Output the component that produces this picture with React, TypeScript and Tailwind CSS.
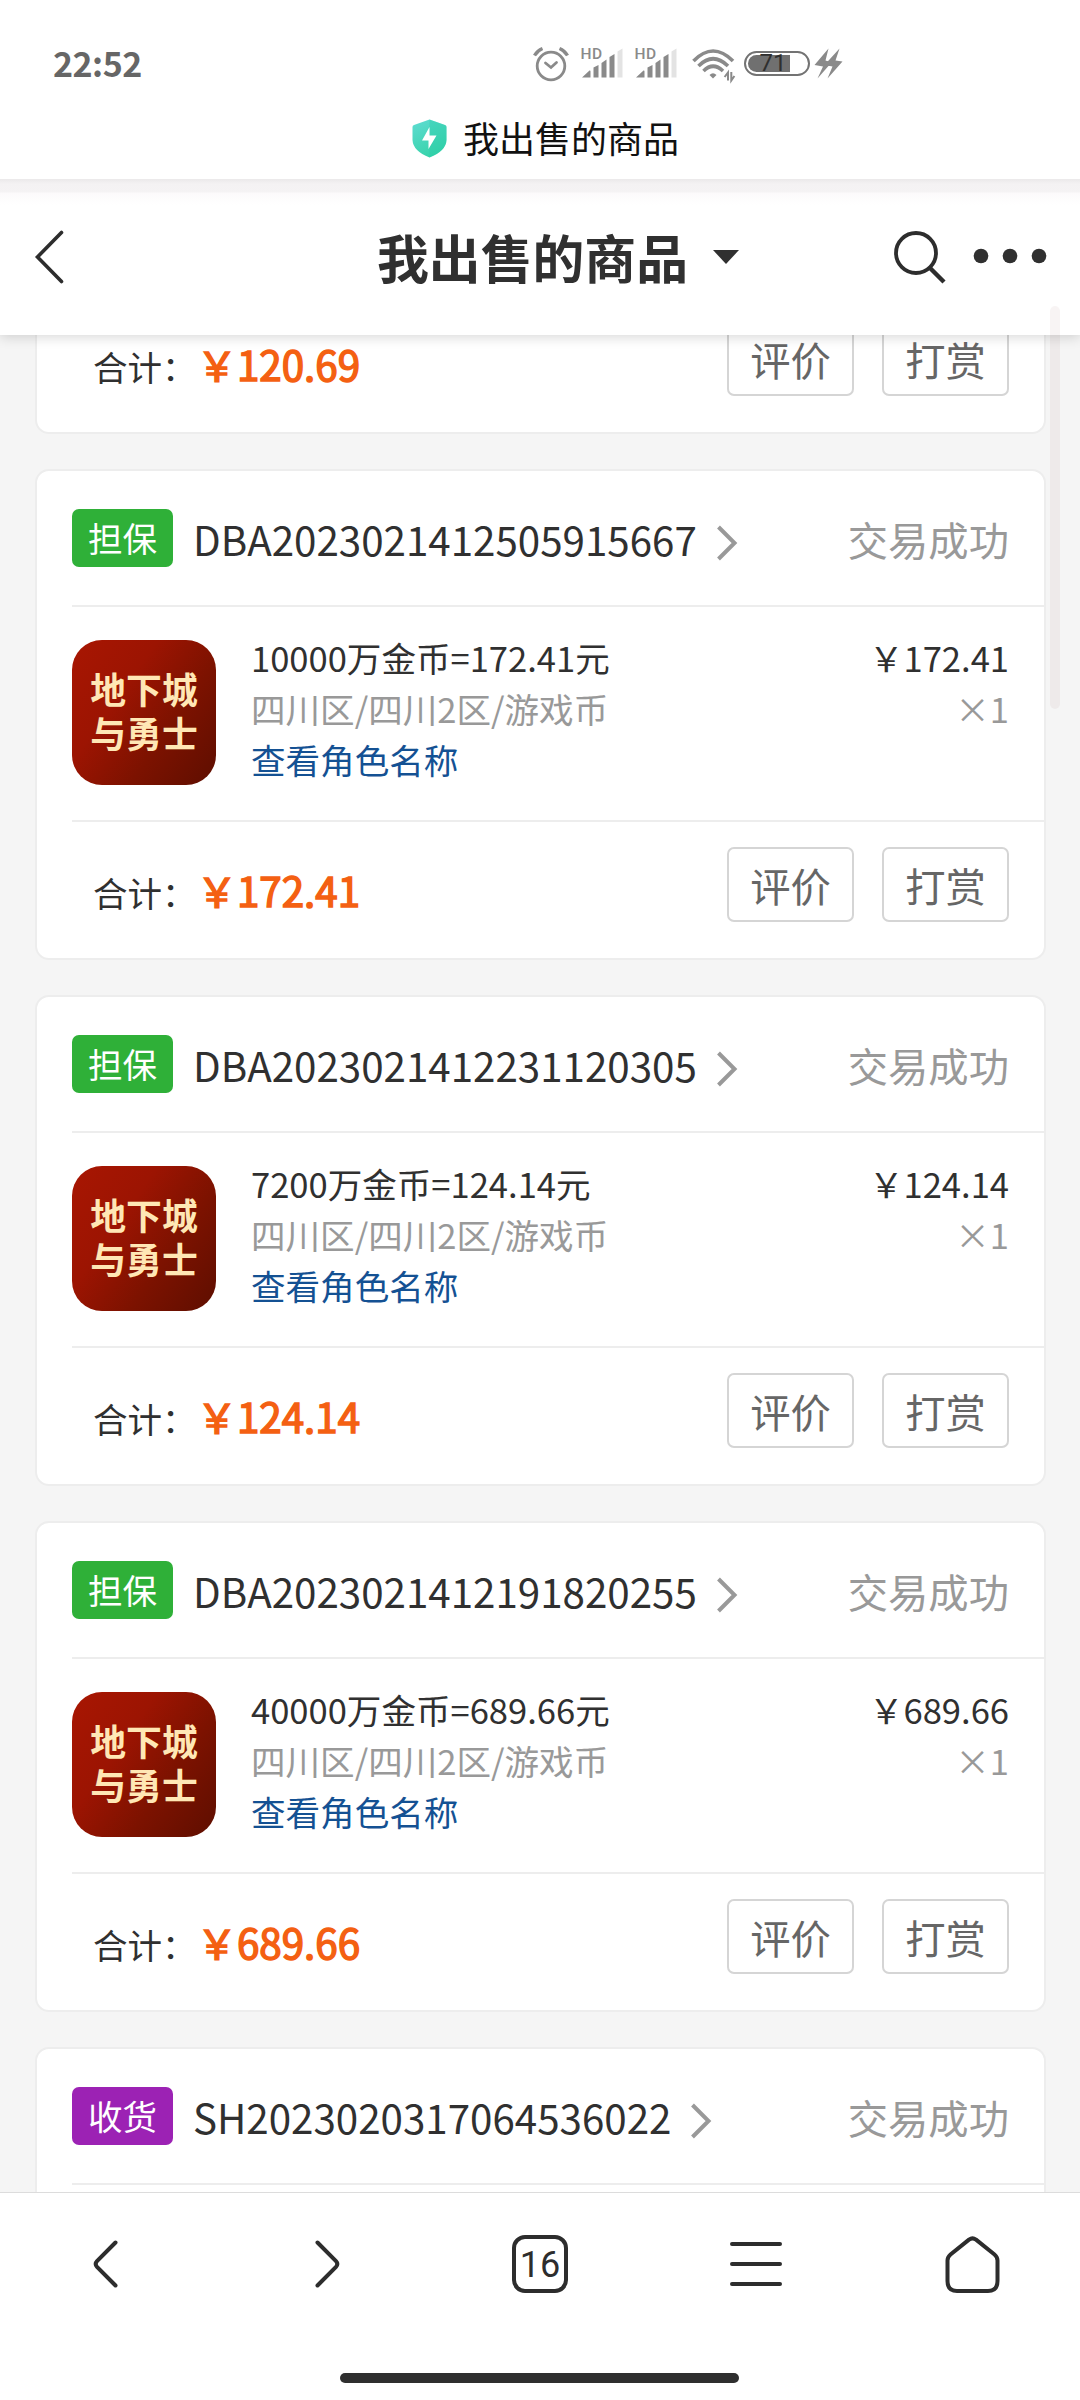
import React from 'react';

interface Order {
  id: string;
  tag: '担保' | '收货';
  title?: string;
  amount?: string;
}

const orders: Order[] = [
  { id: 'DBA2023021412505915667', tag: '担保', title: '10000万金币=172.41元', amount: '172.41' },
  { id: 'DBA2023021412231120305', tag: '担保', title: '7200万金币=124.14元', amount: '124.14' },
  { id: 'DBA2023021412191820255', tag: '担保', title: '40000万金币=689.66元', amount: '689.66' },
  { id: 'SH2023020317064536022', tag: '收货' },
];

const Signal: React.FC = () => (
  <svg className="w-[42px] h-[32px]" viewBox="0 0 42 32" fill="#8a8a8a">
    <text x="-0.5" y="12.5" fontFamily="Roboto" fontSize="15.5" fontWeight="500" letterSpacing="0.6">HD</text>
    <path d="M1 31.5 L8.5 24.5 Q9.5 24 9.5 25.5 V31.5 H2 Q0 31.5 1 31.5Z" />
    <path d="M12.5 21.5 L17.5 19 V31.5 H12.5Z" />
    <path d="M20.5 17 L25.5 13.5 V31.5 H20.5Z" />
    <path d="M28.5 11 L33.5 8 V31.5 H28.5Z" />
    <path d="M36.5 5.5 L41.5 2.5 V31.5 H36.5Z" fill="#e3e3e3" />
  </svg>
);

const StatusBar: React.FC = () => (
  <div className="flex items-center h-[80px] mt-[22px] pl-[53px]">
    <span className="w-[480px] mt-[2px] text-[34px] leading-[80px] font-bold tracking-[-0.5px] text-[#666]">22:52</span>
    <svg className="w-[36px] h-[36px] mt-[3px]" viewBox="0 0 36 36" fill="none" stroke="#8a8a8a" strokeWidth="2.8">
      <circle cx="18" cy="20" r="13.8" />
      <path d="M12.5 17 L18 21.5 L23.5 16.5" strokeLinecap="round" />
      <path d="M1.5 9.5 Q4.5 4.5 9.5 2.5" strokeWidth="3.4" />
      <path d="M26.5 2.5 Q31.5 4.5 34.5 9.5" strokeWidth="3.4" />
    </svg>
    <div className="ml-[11.5px]"><Signal /></div>
    <div className="ml-[12px]"><Signal /></div>
    <svg className="w-[44px] h-[36px] ml-[15px] mt-[8px]" viewBox="0 0 44 36" fill="none" stroke="#8a8a8a" strokeWidth="3.6">
      <path d="M1.5 13 Q21 -7 41 13" />
      <path d="M6.5 18 Q21 3.5 36 18" />
      <path d="M11.5 23 Q21 13.5 31 23" />
      <path d="M21 30.5 L17.5 27 Q21 23.5 24.5 27Z" fill="#8a8a8a" stroke="none" />
      <path d="M36 32.5 V24.5 L32.6 29 M39.3 24 V32.5 L42.4 28" strokeWidth="2" />
    </svg>
    <div className="flex items-center w-[66px] h-[25px] ml-[8px] mt-[3px] p-[2px] rounded-full border-2 border-[#737373]">
      <div className="flex items-center justify-end w-[42px] h-[17px] pr-[3px] rounded-l-full bg-[#707070] text-[24px] leading-[25px] text-[#2f2f2f] font-[Roboto]">71</div>
    </div>
    <svg className="w-[29px] h-[31px] ml-[4px] mt-[3px]" viewBox="0 0 29 31" fill="#8a8a8a">
      <path d="M14.5 0.5 L0.5 17 L9 18.5 L3.5 30.5 L17.5 14.5 L11.5 12.5Z" />
      <path d="M25.5 0.5 L10.5 17 L18.5 18.5 L13.5 30.5 L28.5 13.5 L21.5 12.5Z" />
      <path d="M9 13.5 H20 V18 H9Z" />
    </svg>
  </div>
);

const PageTitle: React.FC = () => (
  <div className="flex items-center h-[77px] pb-[5px] pl-[412px]">
    <svg className="w-[35px] h-[39px]" viewBox="0 0 35 39">
      <defs>
        <linearGradient id="shield" x1="0" y1="0" x2="0.4" y2="1">
          <stop offset="0" stopColor="#5fdcd2" />
          <stop offset="1" stopColor="#38d3ab" />
        </linearGradient>
      </defs>
      <path d="M17.5 0.5 L33 6 Q34.5 6.5 34.5 8 V21 Q34 32 17.5 38.5 Q1 32 0.5 21 V8 Q0.5 6.5 2 6Z" fill="url(#shield)" />
      <path d="M17.5 0.5 L33 6 Q34.5 6.5 34.5 8 V21 Q34 32 17.5 38.5Z" fill="#25caa6" fillOpacity="0.35" />
      <path d="M17.5 8 L10 21.5 H16.5 V30 L24.5 16.5 H17.5Z" fill="#fff" />
    </svg>
    <span className="ml-[16px] -mt-[2px] text-[36px] leading-[72px] text-[#111]">我出售的商品</span>
  </div>
);

const Header: React.FC = () => (
  <div className="relative z-10 flex flex-none items-center h-[156px] bg-white shadow-[0_2px_12px_rgba(0,0,0,0.16)]">
    <div className="absolute inset-x-0 top-0 h-[26px] bg-[linear-gradient(#ebe9ea_0px,#f4f2f3_5px,#f5f3f4_13px,#fcfafb_14px,#ffffff_26px)]" />
    <svg className="w-[30px] h-[56px] ml-[34px]" viewBox="0 0 30 56" fill="none" stroke="#2d2d2d" strokeWidth="3.6">
      <path d="M27.5 3.5 L3.5 28 L27.5 52.5" strokeLinecap="round" />
    </svg>
    <h1 className="ml-[313px] text-[51.84px] leading-[80px] font-bold text-[#303030]">我出售的商品</h1>
    <svg className="w-[26px] h-[14px] ml-[25px]" viewBox="0 0 26 14">
      <path d="M0 0 H26 L13 14Z" fill="#303030" />
    </svg>
    <svg className="w-[54px] h-[54px] ml-[154px]" viewBox="0 0 54 54" fill="none" stroke="#2d2d2d" strokeWidth="3.8">
      <circle cx="23" cy="23" r="20" />
      <path d="M37.5 38.5 L51 52" strokeWidth="4.4" />
    </svg>
    <svg className="w-[74px] h-[16px] ml-[26px] -mt-[2px]" viewBox="0 0 74 16" fill="#303030">
      <circle cx="8" cy="8" r="7.3" />
      <circle cx="37" cy="8" r="7.3" />
      <circle cx="66" cy="8" r="7.3" />
    </svg>
  </div>
);

const OrderFooter: React.FC<{ amount: string }> = ({ amount }) => (
  <div className="flex h-[136px] pl-[21px] pr-[35px]">
    <div className="flex items-baseline flex-1 h-[75px] mt-[30px] leading-[75px]">
      <span className="text-[34.56px] text-[#303030]">合计：</span>
      <span className="text-[40.32px] text-[#f46012] [-webkit-text-stroke:1.5px_#f46012]">￥{amount}</span>
    </div>
    <div className="flex gap-[28px] mt-[25px]">
      <button className="w-[127px] h-[75px] rounded-[7px] border-2 border-[#d5d5d5] text-[40.32px] leading-[69px] text-[#666]">评价</button>
      <button className="w-[127px] h-[75px] rounded-[7px] border-2 border-[#d5d5d5] text-[40.32px] leading-[69px] text-[#666]">打赏</button>
    </div>
  </div>
);

const OrderCard: React.FC<{ order: Order }> = ({ order }) => (
  <div className="flex-none h-[491px] pl-[35px] bg-white border-2 border-[#ededed] rounded-[14px]">
    <div className="flex items-center h-[134px] pr-[35px]">
      <span className={`w-[101px] h-[58px] rounded-[7px] text-center text-[34.56px] leading-[56px] text-white ${order.tag === '担保' ? 'bg-[#2fb038]' : 'bg-[#9c22b4]'}`}>{order.tag}</span>
      <span className="ml-[20px] pt-[1px] text-[40.32px] leading-[60px] text-[#303030]">{order.id}</span>
      <svg className="w-[22px] h-[38px] ml-[19px] mt-[9px]" viewBox="0 0 22 38" fill="none" stroke="#999" strokeWidth="4">
        <path d="M2.5 3 L18.5 19 L2.5 35" />
      </svg>
      <span className="ml-auto pt-[2px] text-[40.32px] leading-[60px] text-[#999]">交易成功</span>
    </div>
    <div className="flex h-[217px] pr-[35px] border-y-2 border-[#ededed]">
      <div className="flex-none w-[144px] h-[145px] mt-[33px] pt-[26px] rounded-[30px] text-center text-[35.8px] leading-[44px] font-bold text-[#ffe7b5] bg-[linear-gradient(125deg,#a81602_0%,#9c1402_35%,#7c1200_65%,#5e0e00_100%)]">
        地下城<br />与勇士
      </div>
      <div className="flex-1 ml-[35px] mt-[25px] text-[34.56px] leading-[51px]">
        <p className="text-[#303030]">{order.title}</p>
        <p className="text-[#999]">四川区/四川2区/游戏币</p>
        <p className="text-[#145193]">查看角色名称</p>
      </div>
      <div className="mt-[25px] text-right text-[34.56px] leading-[51px]">
        <p className="text-[#303030]">￥{order.amount}</p>
        <p className="text-[#999]">×1</p>
      </div>
    </div>
    {order.amount && <OrderFooter amount={order.amount} />}
  </div>
);

const BottomNav: React.FC = () => (
  <div className="flex flex-none flex-col items-center h-[208px] bg-white border-t border-[#dcdcdc]">
    <div className="flex items-center w-full h-[142px] pl-[91px] text-[#2d2d2d]">
      <svg className="w-[29px] h-[50px]" viewBox="0 0 29 50" fill="none" stroke="currentColor" strokeWidth="4" strokeLinecap="round">
        <path d="M24.5 3.5 L6 22.2 Q3.4 25 6 27.8 L24.5 46.5" />
      </svg>
      <svg className="w-[29px] h-[50px] ml-[193px]" viewBox="0 0 29 50" fill="none" stroke="currentColor" strokeWidth="4" strokeLinecap="round">
        <path d="M4.5 3.5 L23 22.2 Q25.6 25 23 27.8 L4.5 46.5" />
      </svg>
      <div className="w-[56px] h-[58px] ml-[170px] rounded-[13px] border-4 border-[#2d2d2d] text-center text-[36px] leading-[52px] font-[Roboto]">16</div>
      <svg className="w-[52px] h-[46px] ml-[162px]" viewBox="0 0 52 46" fill="none" stroke="currentColor" strokeWidth="4" strokeLinecap="round">
        <path d="M2 3 H50 M2 23 H50 M2 43 H50" />
      </svg>
      <svg className="w-[55px] h-[57px] ml-[163px]" viewBox="0 0 55 57" fill="none" stroke="currentColor" strokeWidth="4" strokeLinejoin="round">
        <path d="M24 3.6 Q27.5 1.2 31 3.6 L49.5 18.5 Q52.5 21 52.5 24.5 V45 Q52.5 55 43 55 H12 Q2.5 55 2.5 45 V24.5 Q2.5 21 5.5 18.5Z" />
      </svg>
    </div>
    <div className="w-[399px] h-[10px] mt-[38px] mr-[2px] rounded-full bg-[#2f2f2f]" />
  </div>
);

export default function App() {
  return (
    <div className="relative flex flex-col w-[1080px] h-[2400px] overflow-hidden bg-white font-['Noto_Sans_CJK_SC',sans-serif]">
      <div className="relative z-20 flex-none h-[179px] overflow-hidden bg-white">
        <StatusBar />
        <PageTitle />
      </div>
      <Header />
      <main className="flex flex-1 flex-col gap-[35px] min-h-0 pl-[35px] pr-[34px] overflow-hidden bg-[#f5f5f5]">
        {/* tail of the order scrolled under the header */}
        <div className="flex-none h-[138px] -mt-[39px] pl-[35px] bg-white border-2 border-t-0 border-[#ededed] rounded-b-[14px]">
          <OrderFooter amount="120.69" />
        </div>
        {orders.map((order) => (
          <OrderCard key={order.id} order={order} />
        ))}
      </main>
      <BottomNav />
      {/* scrollbar thumb */}
      <div className="absolute z-20 left-[1050px] top-[306px] w-[10px] h-[403px] rounded-full bg-[#600000]/[0.045]" />
    </div>
  );
}
